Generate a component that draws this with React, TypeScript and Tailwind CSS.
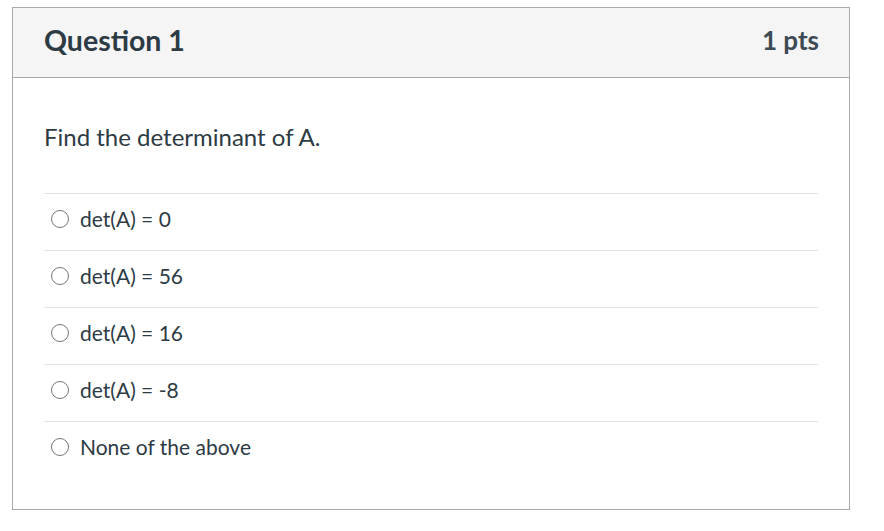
const answers = ["det(A) = 0", "det(A) = 56", "det(A) = 16", "det(A) = -8", "None of the above"];

export default function App() {
  return (
    <div className="min-h-[531px] bg-white pl-[12px] pt-[7px] font-['Lato',sans-serif] text-[#2d3b45]">
      <div className="w-[838px] h-[503px] border border-[#aaaaaa]">
        <div className="flex h-[70px] items-center justify-between border-b border-[#aaaaaa] bg-[#f5f5f5] pb-[4px] pl-[31px] pr-[30px]">
          <h2 className="text-[28.5px] font-bold">Question 1</h2>
          <span className="text-[26px] font-bold text-[#3d4a54]">1 pts</span>
        </div>
        <div className="px-[31px] pt-[45px]">
          <p className="text-[24px] leading-[28px]">Find the determinant of A.</p>
          <div className="mt-[42px]">
            {answers.map((a) => (
              <label key={a} className="flex h-[57px] items-center border-t border-[#e2e2e2] pb-[6px] pl-[7px]">
                <span className="h-[18px] w-[18px] rounded-full border-[1.5px] border-[#777777] bg-white" />
                <span className="ml-[11px] text-[21px]">{a}</span>
              </label>
            ))}
          </div>
        </div>
      </div>
    </div>
  );
}
